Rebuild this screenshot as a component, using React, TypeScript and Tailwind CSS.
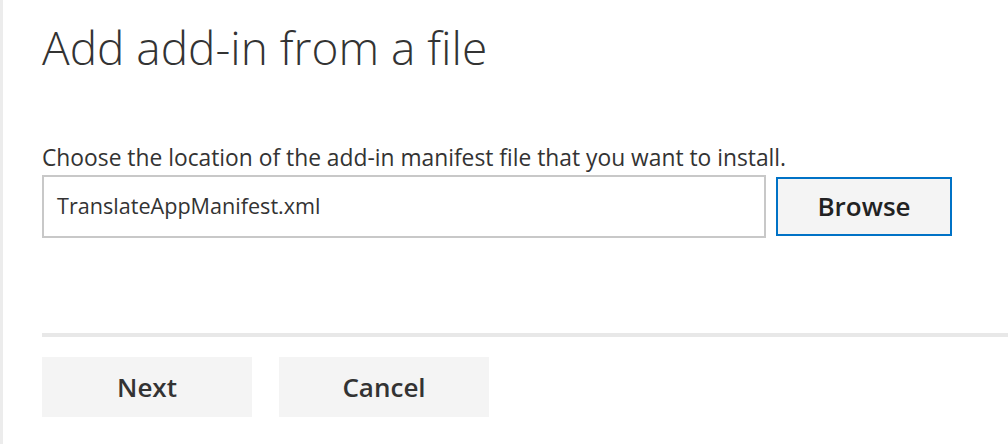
import React from "react";

export default function App() {
  return (
    <div
      className="flex h-[444px] w-[1008px] bg-white text-[#333333]"
      style={{ fontFamily: '"Open Sans", "Noto Sans", sans-serif' }}
    >
      <div className="w-[3px] shrink-0 bg-[#ececec]" />
      <div className="flex flex-1 flex-col pl-[39px]">
        <h1 className="mt-[16px] h-[62px] text-[46px] font-light leading-[62px] text-[#333333]">
          Add add-in from a file
        </h1>
        <p className="mt-[65px] h-[30px] text-[22.8px] leading-[30px] text-[#333333]">
          Choose the location of the add-in manifest file that you want to install.
        </p>
        <div className="mt-[2px] flex items-center gap-[10px]">
          <div className="flex h-[63px] w-[724px] items-center border-2 border-[#c8c8c8] bg-white pl-[13px] text-[21.6px] text-[#333333]">
            TranslateAppManifest.xml
          </div>
          <button className="flex h-[59px] w-[176px] items-center justify-center border-2 border-[#0072c6] bg-[#f4f4f4] text-[26px] font-semibold text-[#222222]">
            Browse
          </button>
        </div>
        <div className="mt-[95px] h-[4px] w-full bg-[#e8e8e8]" />
        <div className="mt-[20px] flex gap-[27px]">
          <button className="flex h-[60px] w-[210px] items-center justify-center bg-[#f4f4f4] text-[26px] font-semibold text-[#333333]">
            Next
          </button>
          <button className="flex h-[60px] w-[210px] items-center justify-center bg-[#f4f4f4] text-[26px] font-semibold text-[#333333]">
            Cancel
          </button>
        </div>
      </div>
    </div>
  );
}
